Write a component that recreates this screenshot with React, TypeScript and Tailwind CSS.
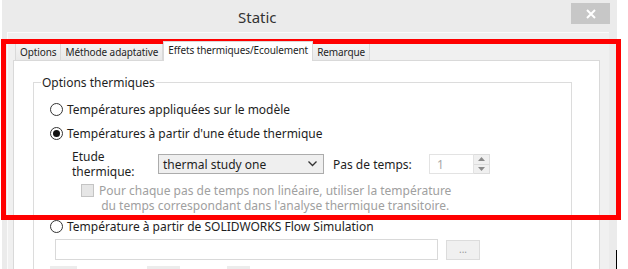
import React from 'react';

function Radio({ checked, label }: { checked?: boolean; label: string }) {
  return (
    <div className="flex items-center gap-[4px]">
      <span className="flex h-[13px] w-[13px] items-center justify-center rounded-full border border-[#333333] bg-white">
        {checked && <span className="h-[7px] w-[7px] rounded-full bg-[#111111]" />}
      </span>
      <span className="text-[#1e1e1e]">{label}</span>
    </div>
  );
}

function Tab({ label, active }: { label: string; active?: boolean }) {
  if (active) {
    return (
      <div className="relative z-10 -mb-px flex h-[20px] items-start border border-b-0 border-[#d9d9d9] bg-white px-[4px] pt-[2px] text-[#1e1e1e]">
        {label}
      </div>
    );
  }
  return (
    <div className="-ml-px flex h-[17px] items-center border border-b-0 border-[#d9d9d9] bg-gradient-to-b from-[#f4f4f4] to-[#e9e9e9] px-[4px] text-[#1e1e1e] first:ml-0">
      {label}
    </div>
  );
}

export default function App() {
  return (
    <div
      className="relative h-[269px] w-[628px] overflow-hidden bg-white text-[12px] leading-[15px]"
      style={{ fontFamily: '"Noto Sans", "Open Sans", sans-serif' }}
    >
      <div className="ml-[2px] flex h-full w-[615px] flex-col bg-[#ebebeb]">
        {/* title bar */}
        <div className="flex h-[32px] shrink-0 items-start">
          <span className="ml-[236px] mt-[8px] text-[15px] leading-[18px] text-[#333333]">Static</span>
          <div className="ml-auto mr-[7px] mt-[3px] flex h-[21px] w-[39px] items-center justify-center bg-[#c7c7c7]">
            <svg width="10" height="10" viewBox="0 0 10 10">
              <path d="M1 1 L9 9 M9 1 L1 9" stroke="#ffffff" strokeWidth="2" />
            </svg>
          </div>
        </div>

        {/* inner panel */}
        <div className="ml-[5px] flex w-[602px] flex-1 flex-col border-l border-t border-[#fafafa] bg-[#f0f0f0] pl-[5px] pt-[8px]">
          <div className="ml-[2px] flex h-[19px] items-end text-[10px] leading-[13px] tracking-[-0.1px]">
            <Tab label="Options" />
            <Tab label="Méthode adaptative" />
            <Tab label="Effets thermiques/Ecoulement" active />
            <Tab label="Remarque" />
          </div>

          <div className="w-[587px] flex-1 border border-[#d9d9d9] bg-white pl-[19px] pt-[14px]">
            <fieldset className="w-[539px] border border-[#dcdcdc] pb-[20px]">
              <legend className="ml-[7px] px-[1px] text-[#1e1e1e]">Options thermiques</legend>

              <div className="flex flex-col pl-[16px] pt-[12px]">
                <Radio label="Températures appliquées sur le modèle" />
                <div className="mt-[9px]">
                  <Radio checked label="Températures à partir d'une étude thermique" />
                </div>

                <div className="mt-[8px] flex items-center">
                  <div className="ml-[22px] flex w-[86px] flex-col text-[#1e1e1e]">
                    <span className="h-[15px]">Etude</span>
                    <span className="h-[15px]">thermique:</span>
                  </div>
                  <div className="flex h-[20px] w-[166px] items-center justify-between border border-[#acacac] bg-[#efefef] pl-[4px] pr-[6px] text-[#1e1e1e]">
                    <span>thermal study one</span>
                    <svg width="9" height="6" viewBox="0 0 9 6">
                      <path d="M0.5 0.5 L4.5 4.5 L8.5 0.5" stroke="#333333" strokeWidth="1.3" fill="none" />
                    </svg>
                  </div>
                  <span className="ml-[9px] w-[96px] text-[#1e1e1e]">Pas de temps:</span>
                  <div className="flex h-[20px]">
                    <div className="flex w-[45px] items-center border border-[#e3e3e3] bg-white pl-[7px] text-[#a8a8a8]">
                      1
                    </div>
                    <div className="flex w-[16px] flex-col">
                      <div className="flex flex-1 items-center justify-center border border-b-0 border-l-0 border-[#dcdcdc] bg-[#f0f0f0]">
                        <svg width="7" height="4" viewBox="0 0 7 4">
                          <path d="M0 4 L3.5 0 L7 4 Z" fill="#8a8a8a" />
                        </svg>
                      </div>
                      <div className="flex flex-1 items-center justify-center border border-l-0 border-[#dcdcdc] bg-[#f0f0f0]">
                        <svg width="7" height="4" viewBox="0 0 7 4">
                          <path d="M0 0 L3.5 4 L7 0 Z" fill="#8a8a8a" />
                        </svg>
                      </div>
                    </div>
                  </div>
                </div>

                <div className="ml-[31px] mt-[4px] flex items-start gap-[5px]">
                  <span className="mt-[1px] h-[13px] w-[13px] shrink-0 border border-[#c4c4c4] bg-[#e6e6e6]" />
                  <div className="flex flex-col items-center text-[#a0a0a0]">
                    <span className="h-[15px]">Pour chaque pas de temps non linéaire, utiliser la température</span>
                    <span className="h-[15px]">du temps correspondant dans l'analyse thermique transitoire.</span>
                  </div>
                </div>

                <div className="mt-[6px]">
                  <Radio label="Température à partir de SOLIDWORKS Flow Simulation" />
                </div>

                <div className="ml-[5px] mt-[5px] flex items-center gap-[8px]">
                  <div className="h-[21px] w-[383px] border border-[#d9d9d9] bg-white" />
                  <div className="flex h-[20px] w-[34px] items-center justify-center border border-[#dcdcdc] bg-[#f0f0f0] text-[10px] text-[#9a9a9a]">
                    ...
                  </div>
                </div>

                <div className="mt-[6px] flex">
                  <div className="h-[10px] w-[27px] bg-[#ececec]" />
                  <div className="ml-[70px] h-[10px] w-[33px] bg-[#ececec]" />
                  <div className="ml-[47px] h-[10px] w-[23px] bg-[#ececec]" />
                </div>
              </div>
            </fieldset>
          </div>
        </div>
      </div>

      {/* red highlight frame drawn over the screenshot */}
      <div className="pointer-events-none absolute left-[1px] top-[39px] h-[181px] w-[620px] border-[5px] border-[#ff0000]" />
      {/* stray cursor line */}
      <div className="absolute left-[616px] top-[250px] h-[19px] w-px bg-black" />
    </div>
  );
}
